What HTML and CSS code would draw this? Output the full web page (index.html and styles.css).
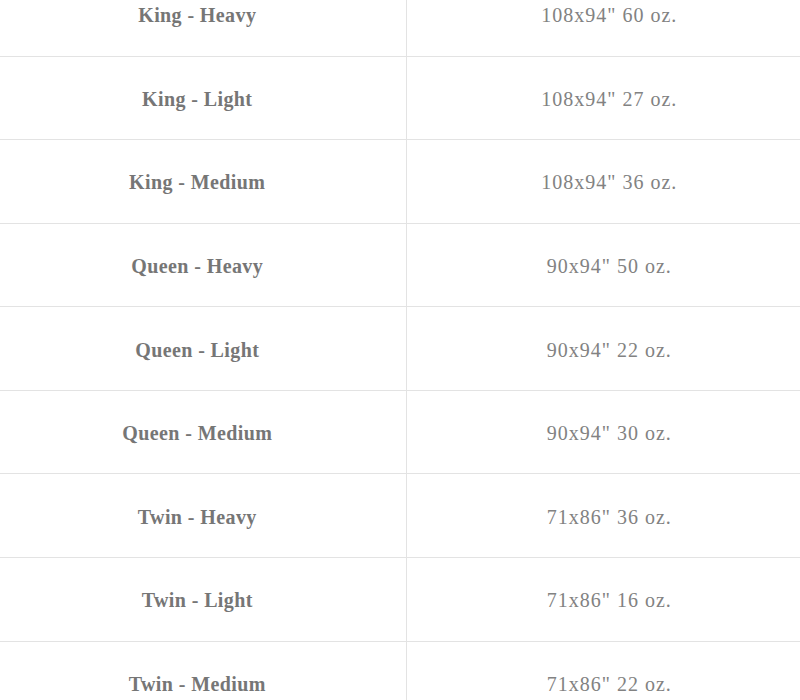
FILE: index.html
```html
<!DOCTYPE html>
<html>
<head>
<meta charset="utf-8">
<link rel="stylesheet" href="styles.css">
</head>
<body>
<table class="sizes">
  <tbody>
    <tr><td class="name">King - Heavy</td><td class="dim">108x94" 60 oz.</td></tr>
    <tr><td class="name">King - Light</td><td class="dim">108x94" 27 oz.</td></tr>
    <tr><td class="name">King - Medium</td><td class="dim">108x94" 36 oz.</td></tr>
    <tr><td class="name">Queen - Heavy</td><td class="dim">90x94" 50 oz.</td></tr>
    <tr><td class="name">Queen - Light</td><td class="dim">90x94" 22 oz.</td></tr>
    <tr><td class="name">Queen - Medium</td><td class="dim">90x94" 30 oz.</td></tr>
    <tr><td class="name">Twin - Heavy</td><td class="dim">71x86" 36 oz.</td></tr>
    <tr><td class="name">Twin - Light</td><td class="dim">71x86" 16 oz.</td></tr>
    <tr><td class="name">Twin - Medium</td><td class="dim">71x86" 22 oz.</td></tr>
  </tbody>
</table>
</body>
</html>
```
FILE: styles.css
```css
html, body {
  margin: 0;
  padding: 0;
  background: #ffffff;
  overflow: hidden;
}
.sizes {
  width: 800px;
  border-collapse: collapse;
  margin-top: -27.6px;
  font-family: "Liberation Serif", "Times New Roman", serif;
  font-size: 20px;
}
.sizes td {
  height: 83.6px;
  box-sizing: border-box;
  padding: 3px 0 0 0;
  text-align: center;
  vertical-align: middle;
  border-bottom: 1px solid #e3e3e3;
}
.sizes td.name {
  width: 406px;
  padding-right: 11px;
  border-right: 1px solid #e3e3e3;
  color: #767676;
  font-weight: bold;
  letter-spacing: 0.4px;
}
.sizes td.dim {
  padding-left: 12px;
  color: #828282;
  letter-spacing: 1px;
}
```
